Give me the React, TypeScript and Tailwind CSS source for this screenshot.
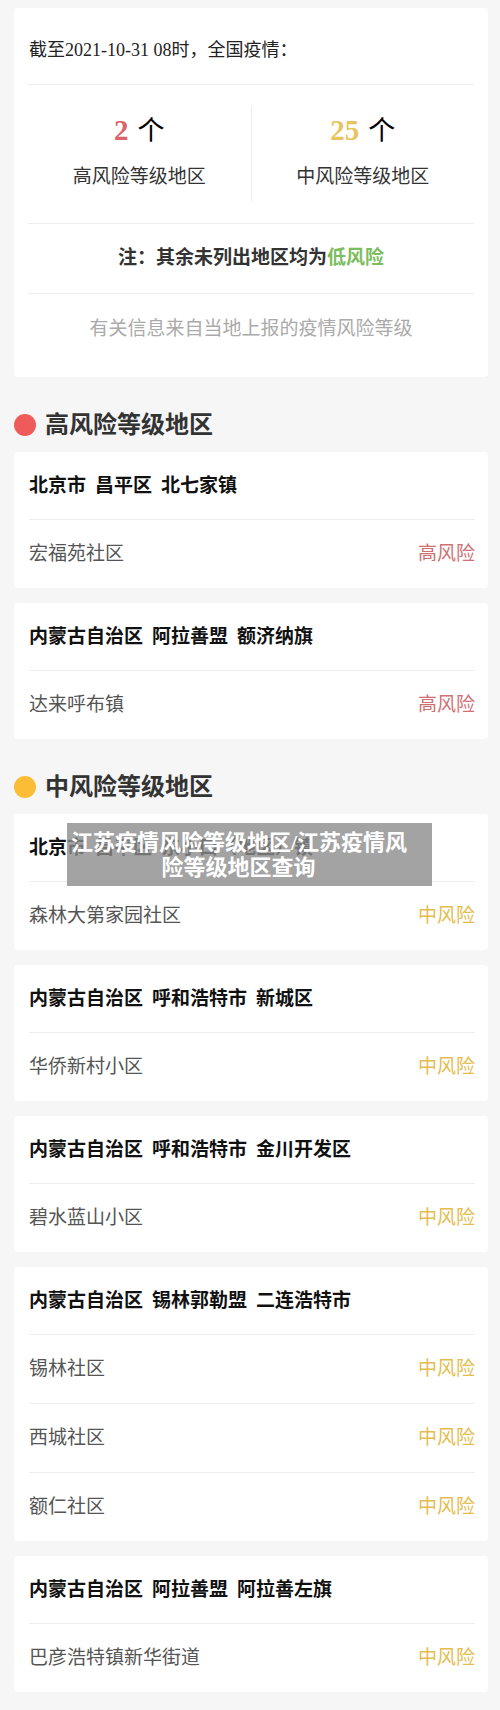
const SANS = "font-['Liberation_Serif','Noto_Sans_CJK_SC',sans-serif]";

type Region = {
  title: string[];
  places: string[];
};

const highRegions: Region[] = [
  { title: ["北京市", "昌平区", "北七家镇"], places: ["宏福苑社区"] },
  { title: ["内蒙古自治区", "阿拉善盟", "额济纳旗"], places: ["达来呼布镇"] },
];

const midRegions: Region[] = [
  { title: ["北京市", "昌平区", "东小口（地区）镇"], places: ["森林大第家园社区"] },
  { title: ["内蒙古自治区", "呼和浩特市", "新城区"], places: ["华侨新村小区"] },
  { title: ["内蒙古自治区", "呼和浩特市", "金川开发区"], places: ["碧水蓝山小区"] },
  {
    title: ["内蒙古自治区", "锡林郭勒盟", "二连浩特市"],
    places: ["锡林社区", "西城社区", "额仁社区"],
  },
  { title: ["内蒙古自治区", "阿拉善盟", "阿拉善左旗"], places: ["巴彦浩特镇新华街道"] },
];

function SectionHeading({ label, dot }: { label: string; dot: string }) {
  return (
    <div className="mt-[33px] mb-[12px] flex h-[30px] items-center">
      <span className={`h-[22px] w-[22px] rounded-full ${dot}`} />
      <span className="ml-[9px] text-[24px] font-bold leading-[30px] text-[#333]">
        {label}
      </span>
    </div>
  );
}

function RegionCard({
  region,
  level,
  levelColor,
}: {
  region: Region;
  level: string;
  levelColor: string;
}) {
  return (
    <div className="rounded-[4px] bg-white pl-[15px] pr-[13px]">
      <div className="flex gap-[9px] pt-[21px] pb-[20px] text-[19px] font-bold leading-[26px] text-[#111]">
        {region.title.map((t) => (
          <span key={t}>{t}</span>
        ))}
      </div>
      {region.places.map((p) => (
        <div
          key={p}
          className="flex h-[69px] items-center justify-between border-t border-[#ededed] text-[19px] leading-[26px]"
        >
          <span className="text-[#555]">{p}</span>
          <span className={levelColor}>{level}</span>
        </div>
      ))}
    </div>
  );
}

export default function App() {
  return (
    <div className={`relative min-h-[1710px] bg-[#f6f6f6] pt-[8px] pb-[14px] pl-[14px] pr-[12px] ${SANS}`}>
      {/* summary */}
      <div className="rounded-[4px] bg-white px-[14px]">
        <div className="border-b border-[#ededed] pt-[29px] pb-[21px] pl-[1px] text-[18px] leading-[26px] text-[#222]">
          截至2021-10-31 08时，全国疫情：
        </div>
        <div className="flex border-b border-[#ededed] py-[21px]">
          <div className="flex h-[96px] flex-1 flex-col items-center border-r border-[#ededed] pt-[4px]">
            <div className="flex items-baseline leading-[40px]">
              <span className="text-[29px] font-bold text-[#d9656b]">2</span>
              <span className="ml-[9px] text-[27px] text-black">个</span>
            </div>
            <div className="mt-[13px] text-[19px] leading-[26px] text-[#333]">高风险等级地区</div>
          </div>
          <div className="flex h-[96px] flex-1 flex-col items-center pt-[4px]">
            <div className="flex items-baseline leading-[40px]">
              <span className="text-[29px] font-bold text-[#e8c45e]">25</span>
              <span className="ml-[9px] text-[27px] text-black">个</span>
            </div>
            <div className="mt-[13px] text-[19px] leading-[26px] text-[#333]">中风险等级地区</div>
          </div>
        </div>
        <div className="flex h-[70px] items-center justify-center border-b border-[#ededed] text-[19px] font-bold text-[#333]">
          注：其余未列出地区均为<span className="text-[#7cbd5d]">低风险</span>
        </div>
        <div className="pt-[22px] pb-[35px] text-center text-[19px] leading-[26px] text-[#aaa]">
          有关信息来自当地上报的疫情风险等级
        </div>
      </div>

      <SectionHeading label="高风险等级地区" dot="bg-[#ef5b5b]" />
      <div className="flex flex-col gap-[15px]">
        {highRegions.map((r) => (
          <RegionCard key={r.title.join()} region={r} level="高风险" levelColor="text-[#cf7074]" />
        ))}
      </div>

      <SectionHeading label="中风险等级地区" dot="bg-[#fbbc36]" />
      <div className="flex flex-col gap-[15px]">
        {midRegions.map((r) => (
          <RegionCard key={r.title.join()} region={r} level="中风险" levelColor="text-[#e3bd4f]" />
        ))}
      </div>

      {/* caption overlay */}
      <div className="absolute left-[67px] top-[823px] flex h-[63px] w-[365px] items-center bg-[#8c8c8c]/80 pl-[4px] pr-[26px]">
        <p className="w-full whitespace-nowrap text-center text-[22px] font-bold leading-[25px] text-white">
          江苏疫情风险等级地区/江苏疫情风
          <br />
          险等级地区查询
        </p>
      </div>
    </div>
  );
}
